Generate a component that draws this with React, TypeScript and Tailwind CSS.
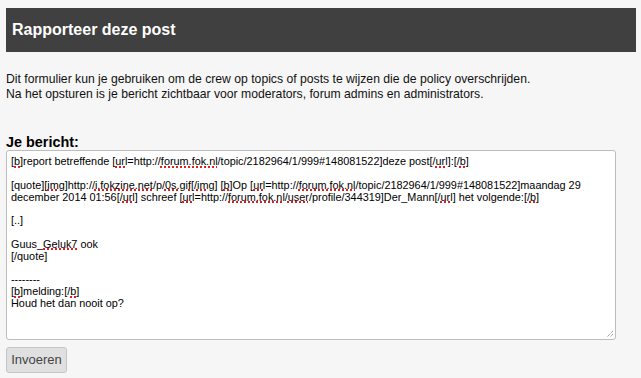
import type { ReactNode } from "react";

const Sp = ({ children }: { children: ReactNode }) => (
  <span className="underline decoration-dotted decoration-[#e02020] decoration-[1.5px] underline-offset-[1px]">
    {children}
  </span>
);

const App = () => {
  return (
    <div className="min-h-screen bg-[#f6f6f6] pt-2 px-[6px] font-['Liberation_Sans',Arial,sans-serif] text-[12.2px] text-[#111]">
      <div className="w-[630px] h-[44px] bg-[#404040] flex items-center px-[6px]">
        <h1 className="text-white font-bold text-[16px]">Rapporteer deze post</h1>
      </div>

      <p className="mt-5 leading-[15px]">
        Dit formulier kun je gebruiken om de crew op topics of posts te wijzen die de policy overschrijden.
        <br />
        Na het opsturen is je bericht zichtbaar voor moderators, forum admins en administrators.
      </p>

      <h2 className="mt-[33px] font-bold text-[14.4px] leading-[15px] text-black">Je bericht:</h2>

      <div className="relative w-[610px] h-[190px] bg-white border border-[#bdbdbd] rounded-[3px] pl-[4px] pt-[5px] text-[10.86px] leading-[11.85px] text-black">
        <div>
          [<Sp>b</Sp>]report betreffende [<Sp>url</Sp>=http://<Sp>forum.fok.nl</Sp>/topic/2182964/1/999#148081522]deze post[/<Sp>url</Sp>]:[/<Sp>b</Sp>]
        </div>
        <div>&nbsp;</div>
        <div>
          [quote][<Sp>img</Sp>]http://<Sp>i.fokzine.net</Sp>/p/<Sp>0s.gif</Sp>[/<Sp>img</Sp>] [<Sp>b</Sp>]Op [<Sp>url</Sp>=http://<Sp>forum.fok.nl</Sp>/topic/2182964/1/999#148081522]maandag 29
        </div>
        <div>
          december 2014 01:56[/<Sp>url</Sp>] schreef [<Sp>url</Sp>=http://<Sp>forum.fok.nl</Sp>/<Sp>user</Sp>/profile/344319]Der_Mann[/<Sp>url</Sp>] het volgende:[/<Sp>b</Sp>]
        </div>
        <div>&nbsp;</div>
        <div>[..]</div>
        <div>&nbsp;</div>
        <div>
          Guus_<Sp>Geluk7</Sp> ook
        </div>
        <div>[/quote]</div>
        <div>&nbsp;</div>
        <div>--------</div>
        <div>
          [<Sp>b</Sp>]melding:[/<Sp>b</Sp>]
        </div>
        <div>Houd het dan nooit op?</div>

        <svg className="absolute right-[1px] bottom-[1px]" width="9" height="9" viewBox="0 0 9 9">
          <path d="M8 2 L2 8 M8 5 L5 8" stroke="#777" strokeWidth="1" strokeDasharray="1 1" />
        </svg>
      </div>

      <button className="mt-[7px] w-[61px] h-[26px] bg-[#e0e0e0] border border-[#c6c6c6] rounded-[3px] text-[13px] text-[#444]">
        Invoeren
      </button>
    </div>
  );
};

export default App;
